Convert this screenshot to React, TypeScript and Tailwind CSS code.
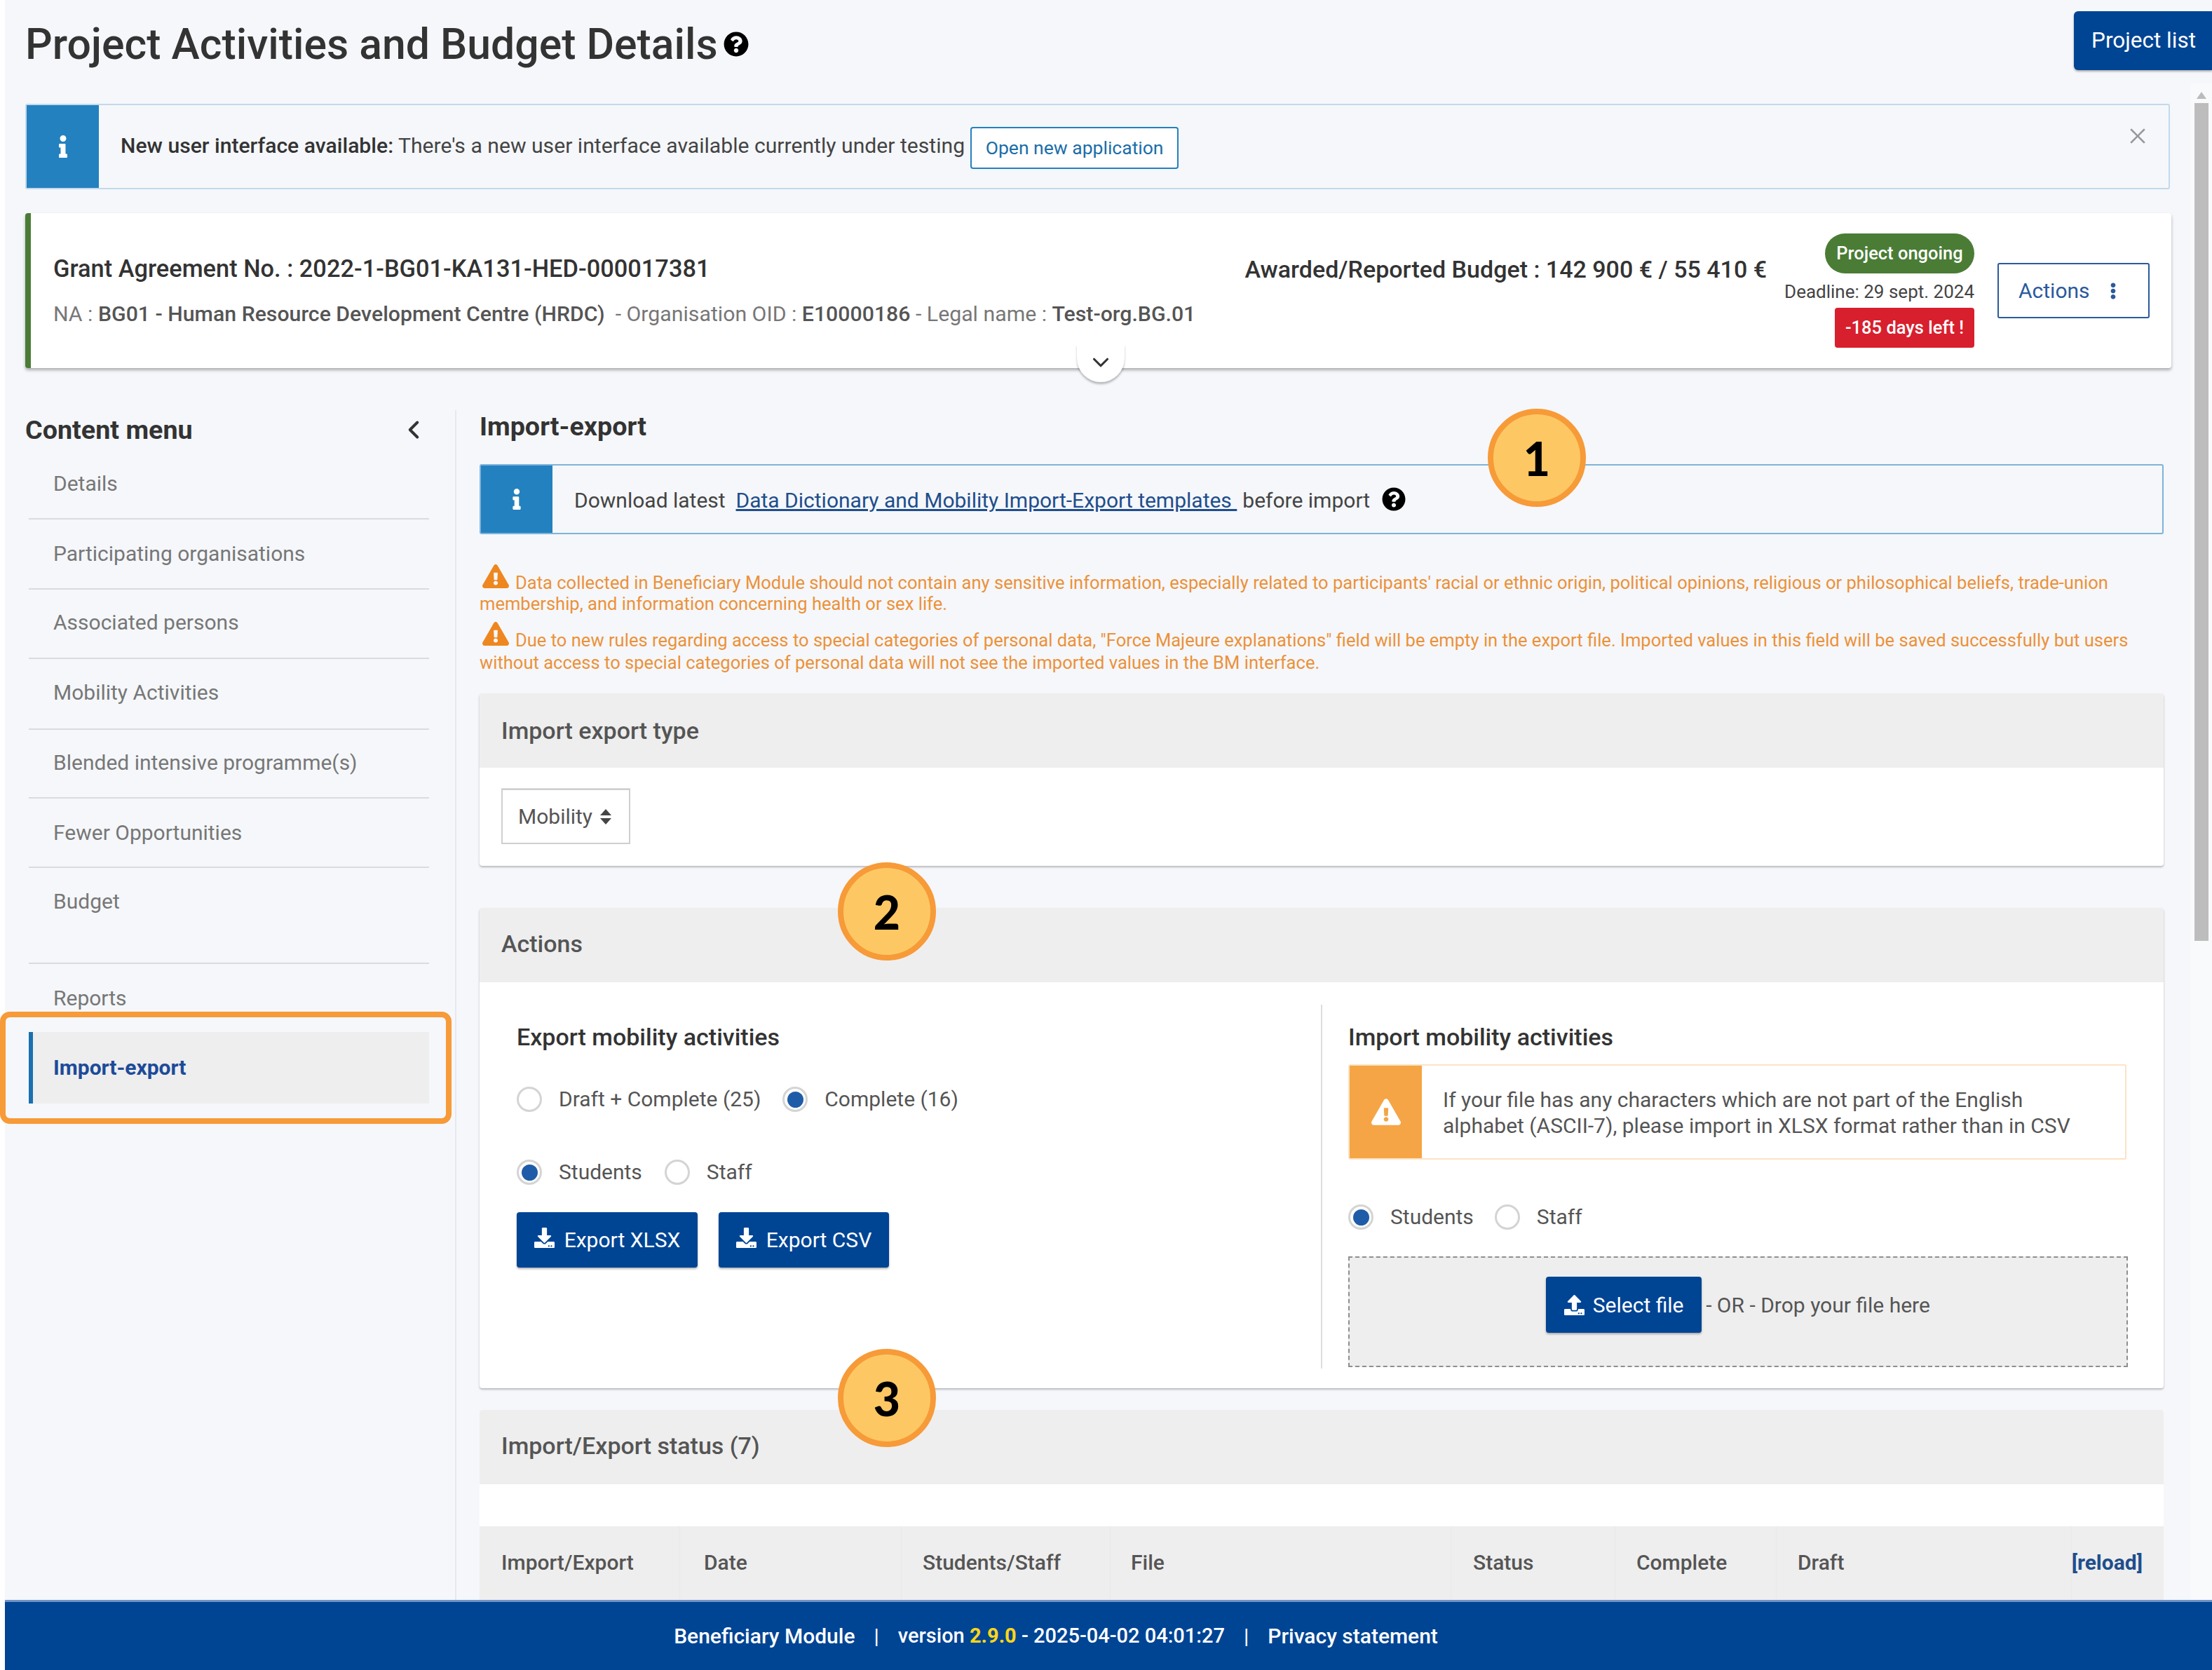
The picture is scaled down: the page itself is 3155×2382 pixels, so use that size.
import React from "react";
import { FaInfo, FaQuestionCircle, FaExclamationTriangle, FaDownload, FaUpload, FaEllipsisV } from "react-icons/fa";
import { ChevronLeft, ChevronDown, X } from "lucide-react";

function Radio({ checked }: { checked?: boolean }) {
  return (
    <span className="flex h-[36px] w-[36px] shrink-0 items-center justify-center rounded-full border-[3px] border-[#d4d4d4] bg-white">
      {checked ? <span className="h-[23px] w-[23px] rounded-full bg-[#1f5ca8]" /> : null}
    </span>
  );
}

function Choice({ label, checked, gap }: { label: string; checked?: boolean; gap: string }) {
  return (
    <div className={`flex items-center gap-[24px] ${gap}`}>
      <Radio checked={checked} />
      <span className="text-[30px] leading-[36px] text-[#555]">{label}</span>
    </div>
  );
}

function Badge({ n, className }: { n: string; className: string }) {
  return (
    <div className={`absolute z-20 flex h-[140px] w-[140px] items-center justify-center rounded-full border-[8px] border-[#f79a38] bg-[#fdc864] [font-family:Lato,sans-serif] text-[66px] font-black text-black ${className}`}>
      {n}
    </div>
  );
}

function CardHeader({ title, pad }: { title: string; pad?: string }) {
  return (
    <div className={`flex h-[106px] items-center rounded-t-[4px] bg-[#eeeeee] pl-[31px] text-[34px] font-medium text-[#555] ${pad ?? ""}`}>
      {title}
    </div>
  );
}

const menu = [
  { label: "Details", cls: "h-[101px] items-center border-b-2" },
  { label: "Participating organisations", cls: "h-[100px] items-center border-b-2" },
  { label: "Associated persons", cls: "h-[99px] items-center pb-[3px] border-b-2" },
  { label: "Mobility Activities", cls: "h-[101px] items-center pb-[3px] border-b-2" },
  { label: "Blended intensive programme(s)", cls: "h-[98px] items-center pb-[3px] border-b-2" },
  { label: "Fewer Opportunities", cls: "h-[99px] items-center border-b-2" },
  { label: "Budget", cls: "h-[137px] items-start pt-[28px] border-b-2" },
  { label: "Reports", cls: "h-[97px] items-center" },
];

const cols = [
  { t: "Import/Export", c: "w-[286px] pl-[31px]" },
  { t: "Date", c: "w-[316px] pl-[34px]" },
  { t: "Students/Staff", c: "w-[298px] pl-[30px]" },
  { t: "File", c: "w-[486px] pl-[29px]" },
  { t: "Status", c: "w-[234px] pl-[31px]" },
  { t: "Complete", c: "w-[230px] pl-[30px]" },
  { t: "Draft", c: "flex-1 pl-[30px]" },
];

export default function App() {
  return (
    <div className="relative flex h-[2382px] w-[3155px] flex-col overflow-hidden bg-white pl-[7px] [font-family:Roboto,sans-serif]">
      <div className="flex min-h-0 flex-1 flex-col overflow-hidden bg-[#f5f7fa]">
        <div className="flex h-[119px] shrink-0 items-start justify-between pl-[29px]">
          <div className="mt-[30px] flex items-center gap-[8px]">
            <h1 className="text-[60.7px] font-medium leading-[68px] text-[#333]">Project Activities and Budget Details</h1>
            <FaQuestionCircle className="mb-[2px] text-[36px] text-black" />
          </div>
          <button className="mt-[16px] flex h-[84px] w-[197px] items-center justify-center rounded-l-[6px] bg-[#004494] pl-[2px] text-[31.5px] text-white shadow-[0_2px_3px_rgba(0,0,0,0.3)]">
            Project list
          </button>
        </div>

        <div className="flex min-h-0 flex-1">
          <div className="relative flex min-w-0 flex-1 flex-col overflow-hidden pl-[29px] pr-[27px]">
            <div className="mr-[2px] mt-[29px] flex h-[122px] shrink-0 rounded-[3px] border-2 border-[#c3d9eb]">
              <div className="flex w-[103px] shrink-0 items-center justify-center bg-[#2381bf] text-[32px] text-white">
                <FaInfo />
              </div>
              <div className="flex flex-1 items-center pl-[31px] text-[30.15px] text-[#444]">
                <span className="-mt-[2px]"><b className="font-medium text-[#333]">New user interface available:</b> There's a new user interface available currently under testing</span>
                <button className="ml-[8px] mt-[4px] flex h-[60px] w-[297px] items-center justify-center rounded-[4px] border-2 border-[#2381bf] bg-white text-[26.5px] text-[#1a6ea8]">
                  Open new application
                </button>
              </div>
              <X className="mr-[26px] mt-[26px] h-[36px] w-[36px] text-[#999]" strokeWidth={1.75} />
            </div>

            <div className="relative mt-[34px] flex h-[221px] shrink-0 items-center rounded-[4px] border-l-[8px] border-[#4a7c36] bg-white pl-[32px] pr-[31px] shadow-[0_3px_4px_rgba(0,0,0,0.3)]">
              <div className="flex-1 pt-[3px]">
                <div className="flex h-[40px] items-center pr-[24px] text-[34px] font-medium text-[#333]">
                  <span className="flex-1 text-[34.4px]">Grant Agreement No. : 2022-1-BG01-KA131-HED-000017381</span>
                  <span>Awarded/Reported Budget : 142 900 € / 55 410 €</span>
                </div>
                <div className="mt-[24px] text-[30.25px] leading-[40px] text-[#777]">
                  NA : <b className="font-medium text-[#555]">BG01 - Human Resource Development Centre (HRDC)</b>&nbsp; - Organisation OID : <b className="font-medium text-[#555]">E10000186</b> - Legal name : <b className="font-medium text-[#555]">Test-org.BG.01</b>
                </div>
              </div>
              <div className="flex w-[272px] shrink-0 flex-col items-end">
                <span className="flex h-[57px] w-[213px] items-center justify-center rounded-full bg-[#4a7c36] text-[25.5px] font-medium text-white">Project ongoing</span>
                <span className="mt-[8px] text-[26px] leading-[36px] text-[#444]">Deadline: 29 sept. 2024</span>
                <span className="mt-[5px] flex h-[57px] w-[199px] items-center justify-center rounded-[4px] bg-[#d81f2e] text-[25.5px] font-medium text-white">-185 days left !</span>
              </div>
              <button className="ml-[33px] flex h-[79px] w-[217px] shrink-0 items-center justify-between rounded-[3px] border-2 border-[#2a5a9c] bg-white pl-[28px] pr-[38px] text-[30px] text-[#2a5a9c]">
                Actions
                <FaEllipsisV className="text-[24px] text-[#2a5a9c]" />
              </button>
              <div className="absolute left-[1492px] top-[187px] flex h-[54px] w-[68px] items-start justify-center rounded-b-full bg-white pt-[7px] shadow-[0_3px_3px_rgba(0,0,0,0.25)]">
                <ChevronDown className="h-[38px] w-[38px] text-[#333]" strokeWidth={2} />
              </div>
            </div>

            <div className="mt-[60px] flex min-h-0 flex-1">
              <aside className="w-[615px] shrink-0 border-r-2 border-[#e6e8ee]">
                <div className="flex h-[55px] items-center justify-between pr-[38px] text-[37.7px] font-bold leading-[56px] text-[#333]">
                  Content menu
                  <ChevronLeft className="h-[42px] w-[42px] text-[#333]" strokeWidth={2.25} />
                </div>
                <nav className="ml-[5px] w-[571px]">
                  {menu.map((m) => (
                    <div key={m.label} className={`flex border-[#d8dce0] pl-[35px] text-[30px] leading-[40px] text-[#777] ${m.cls}`}>
                      {m.label}
                    </div>
                  ))}
                  <div className="flex h-[102px] items-center border-l-[6px] border-[#1a6fb0] bg-[#eeeeee] pb-[1px] pl-[29px] text-[30px] font-bold text-[#1d4b99]">
                    Import-export
                  </div>
                </nav>
              </aside>

              <main className="min-w-0 flex-1 overflow-hidden pl-[33px] pr-[11px]">
                <h2 className="h-[46px] text-[37.7px] font-bold leading-[46px] text-[#333]">Import-export</h2>
                <div className="mt-[31px] flex h-[100px] items-center rounded-[3px] border-2 border-[#7fb3d9]">
                  <div className="flex h-full w-[102px] shrink-0 items-center justify-center bg-[#2381bf] text-[30px] text-white">
                    <FaInfo />
                  </div>
                  <div className="flex items-center pl-[31px] text-[30px] text-[#444]">
                    <span className="mt-[3px]">Download latest&nbsp; <a className="text-[#1f4e8c] underline">Data Dictionary and Mobility Import-Export templates </a><span className="ml-[8px]">before import</span></span>
                    <FaQuestionCircle className="ml-[17px] text-[34px] text-black" />
                  </div>
                </div>
                <p className="mt-[54px] text-[25.55px] leading-[30px] text-[#ec9139]">
                  <FaExclamationTriangle className="-mt-[14px] ml-[4px] mr-[9px] inline-block h-[36px] w-[38px] align-baseline text-[#ee8720]" />
                  Data collected in Beneficiary Module should not contain any sensitive information, especially related to participants' racial or ethnic origin, political opinions, religious or philosophical beliefs, trade-union membership, and information concerning health or sex life.
                </p>
                <p className="mt-[21px] text-[25.55px] leading-[32px] text-[#ec9139]">
                  <FaExclamationTriangle className="-mt-[14px] ml-[4px] mr-[9px] inline-block h-[36px] w-[38px] align-baseline text-[#ee8720]" />
                  Due to new rules regarding access to special categories of personal data, "Force Majeure explanations" field will be empty in the export file. Imported values in this field will be saved successfully but users without access to special categories of personal data will not see the imported values in the BM interface.
                </p>

                <section className="mt-[28px] h-[246px] rounded-[4px] bg-white shadow-[0_2px_3px_rgba(0,0,0,0.25)]">
                  <CardHeader title="Import export type" />
                  <div className="pl-[31px] pt-[30px]">
                    <div className="flex h-[79px] w-[184px] items-center gap-[10px] border-2 border-[#cfcfcf] pl-[22px] text-[30px] text-[#555] shadow-[0_-1px_0_#ddd]">
                      Mobility
                      <svg viewBox="0 0 18 22" className="h-[22px] w-[18px]" fill="#444">
                        <polygon points="9,0 17,9 1,9" />
                        <polygon points="1,13 17,13 9,22" />
                      </svg>
                    </div>
                  </div>
                </section>

                <section className="mt-[60px] h-[685px] rounded-[4px] bg-white shadow-[0_2px_3px_rgba(0,0,0,0.25)]">
                  <CardHeader title="Actions" pad="pb-[3px]" />
                  <div className="flex pl-[53px] pt-[32px]">
                    <div className="w-[1147px] shrink-0">
                      <h3 className="pt-[26px] text-[34px] font-medium leading-[40px] text-[#333]">Export mobility activities</h3>
                      <div className="mt-[51px] flex items-center">
                        <Choice label="Draft + Complete (25)" gap="mr-[31px]" />
                        <Choice label="Complete (16)" checked gap="" />
                      </div>
                      <div className="mt-[68px] flex items-center">
                        <Choice label="Students" checked gap="mr-[32px]" />
                        <Choice label="Staff" gap="" />
                      </div>
                      <div className="mt-[39px] flex gap-[30px]">
                        <button className="flex h-[79px] w-[258px] items-center justify-center gap-[14px] rounded-[4px] bg-[#004494] text-[30px] text-white shadow-[0_2px_3px_rgba(0,0,0,0.3)]">
                          <FaDownload className="mb-[6px] text-[29px]" />Export XLSX
                        </button>
                        <button className="flex h-[79px] w-[243px] items-center justify-center gap-[14px] rounded-[4px] bg-[#004494] text-[30px] text-white shadow-[0_2px_3px_rgba(0,0,0,0.3)]">
                          <FaDownload className="mb-[6px] text-[29px]" />Export CSV
                        </button>
                      </div>
                    </div>
                    <div className="h-[519px] w-[1151px] shrink-0 border-l-2 border-[#dddddd] pl-[37px]">
                      <h3 className="pt-[26px] text-[34px] font-medium leading-[40px] text-[#333]">Import mobility activities</h3>
                      <div className="mt-[19px] flex h-[136px] w-[1110px] rounded-[3px] border-2 border-[#fbe3c4]">
                        <div className="flex w-[103px] shrink-0 items-center justify-center bg-[#f5a545] text-[42px] text-white">
                          <FaExclamationTriangle />
                        </div>
                        <div className="flex items-center pl-[30px] pt-[2px] text-[30px] leading-[37px] text-[#555]">
                          <span>If your file has any characters which are not part of the English<br />alphabet (ASCII-7), please import in XLSX format rather than in CSV</span>
                        </div>
                      </div>
                      <div className="mt-[64px] flex items-center">
                        <Choice label="Students" checked gap="mr-[30px]" />
                        <Choice label="Staff" gap="" />
                      </div>
                      <div className="mt-[38px] flex h-[158px] w-[1112px] items-center justify-center gap-[6px] border-2 border-dashed border-[#8e8e8e] bg-[#eeeeee] pb-[20px] text-[30px] text-[#555]">
                        <button className="flex h-[80px] w-[222px] items-center justify-center gap-[12px] rounded-[4px] bg-[#004494] text-white shadow-[0_2px_3px_rgba(0,0,0,0.3)]">
                          <FaUpload className="text-[29px]" />Select file
                        </button>
                        <span>- OR - Drop your file here</span>
                      </div>
                    </div>
                  </div>
                </section>

                <section className="mt-[31px] rounded-t-[4px] bg-white">
                  <CardHeader title="Import/Export status (7)" pad="pb-[3px]" />
                  <div className="mt-[60px] flex h-[108px] items-center bg-[#eeeeee] text-[30px] font-medium text-[#555]">
                    {cols.map((c) => (
                      <div key={c.t} className={`flex h-full items-center border-r border-[#e9e9e9] pb-[6px] last:border-r-0 ${c.c}`}>{c.t}</div>
                    ))}
                    <a className="pb-[6px] pr-[30px] font-bold text-[#1f4e8c]">[reload]</a>
                  </div>
                </section>
              </main>
            </div>
          </div>

          <div className="flex w-[31px] shrink-0 flex-col bg-[#f9fafc] pl-[6px] pr-[5px]">
            <div className="flex h-[28px] shrink-0 items-end justify-center pb-[6px]">
              <span className="h-0 w-0 border-x-[7px] border-b-[10px] border-x-transparent border-b-[#bbbbbb]" />
            </div>
            <div className="h-[1195px] bg-[#bdbdbd]" />
          </div>
        </div>
      </div>

      <footer className="flex h-[100px] shrink-0 items-center justify-center gap-[27px] border-t-[3px] border-[#6f93c4] bg-[#004494] pr-[150px] text-[30px] font-medium text-white">
        <span>Beneficiary Module</span>
        <span className="font-normal">|</span>
        <span className="text-[29px]">version <span className="font-bold text-[#ffd617]">2.9.0</span> - 2025-04-02 04:01:27</span>
        <span className="font-normal">|</span>
        <span>Privacy statement</span>
      </footer>

      <Badge n="1" className="left-[2122px] top-[583px]" />
      <Badge n="2" className="left-[1195px] top-[1230px]" />
      <Badge n="3" className="left-[1195px] top-[1924px]" />
      <div className="absolute left-0 top-[1443px] z-10 h-[160px] w-[644px] rounded-[14px] border-[8px] border-[#f79a38]" />
    </div>
  );
}
